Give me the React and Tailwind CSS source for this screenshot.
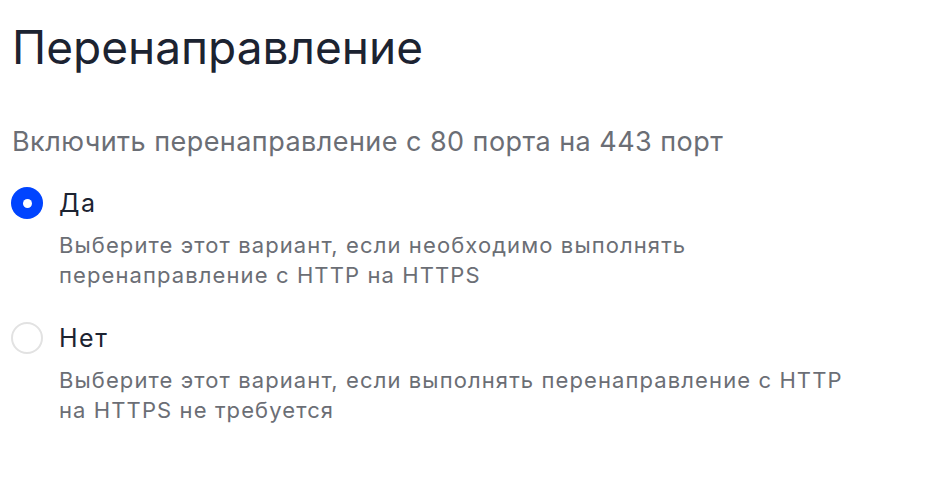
import React, { useState } from 'react';

const options = [
    {
        id: 'yes',
        label: 'Да',
        hint: 'Выберите этот вариант, если необходимо выполнять перенаправление с HTTP на HTTPS',
    },
    {
        id: 'no',
        label: 'Нет',
        hint: 'Выберите этот вариант, если выполнять перенаправление с HTTP на HTTPS не требуется',
    },
];

const App = () => {
    const [value, setValue] = useState('yes');

    return (
        <div className="min-h-screen bg-white pl-3 pt-[19px] font-['Inter',sans-serif]">
            <h1 className="text-[46px] leading-[56px] text-[#1c2331] font-normal">
                Перенаправление
            </h1>
            <p className="mt-[49px] text-[27px] leading-[36px] tracking-[0.45px] text-[#6b6e75]">
                Включить перенаправление с 80 порта на 443 порт
            </p>
            <div className="mt-[24px] flex flex-col gap-[29px]">
                {options.map(opt => {
                    const checked = value === opt.id;
                    return (
                        <label key={opt.id} className="flex gap-4 cursor-pointer" onClick={() => setValue(opt.id)}>
                            <span className={`-ml-px mt-[3px] w-8 h-8 shrink-0 rounded-full flex items-center justify-center ${checked ? 'bg-[#0044ff]' : 'border-2 border-[#e2e2e2]'}`}>
                                {checked && <span className="w-[9px] h-[9px] rounded-full bg-white" />}
                            </span>
                            <div className="flex flex-col">
                                <span className="mt-[3px] text-[25px] leading-[32px] tracking-[1.5px] text-[#1c2331]">{opt.label}</span>
                                <span className="mt-[11px] max-w-[800px] text-[22px] leading-[30px] tracking-[1.1px] text-[#6b6e75]">
                                    {opt.hint}
                                </span>
                            </div>
                        </label>
                    );
                })}
            </div>
        </div>
    );
};

export default App;
